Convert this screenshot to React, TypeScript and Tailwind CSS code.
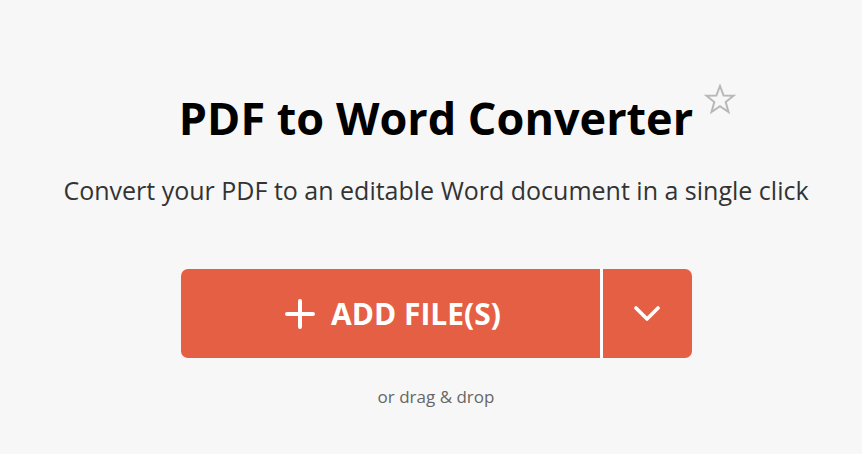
export default function App() {
  return (
    <div
      className="flex h-[454px] w-full flex-col items-center bg-[#f7f7f7] pl-[10px] pt-[88px]"
      style={{ fontFamily: '"Open Sans", sans-serif' }}
    >
      <div className="relative">
        <h1 className="text-[45px] font-bold leading-[60px] text-black">PDF to Word Converter</h1>
        <svg
          viewBox="0 0 32 30"
          className="absolute -right-[43px] -top-[4px] h-[30px] w-[32px]"
          fill="none"
          stroke="#b8b8b8"
          strokeWidth={2}
          strokeLinejoin="miter"
        >
          <polygon points="16,2 19.6,11.6 29.5,11.8 21.7,18 24.5,28 16,22.2 7.5,28 10.3,18 2.5,11.8 12.4,11.6" />
        </svg>
      </div>
      <p className="mt-[25px] text-[25px] leading-[34px] text-[#333]">
        Convert your PDF to an editable Word document in a single click
      </p>

      <div className="mt-[62px] flex h-[89px] w-[511px] overflow-hidden rounded-[7px]">
        <button className="flex flex-1 items-center justify-center gap-[16px] bg-[#e55f44] pl-[6px] text-white">
          <svg viewBox="0 0 30 30" className="size-[30px]" fill="none" stroke="white" strokeWidth={4} strokeLinecap="round">
            <path d="M15 2v26M2 15h26" />
          </svg>
          <span className="text-[30px] font-bold leading-none">ADD FILE(S)</span>
        </button>
        <div className="w-[3px] bg-white" />
        <button className="flex w-[89px] items-center justify-center bg-[#e55f44] text-white">
          <svg viewBox="0 0 26 16" className="h-[16px] w-[26px]" fill="none" stroke="white" strokeWidth={3.6} strokeLinecap="round" strokeLinejoin="round">
            <path d="M2 2l11 11L24 2" />
          </svg>
        </button>
      </div>

      <p className="mt-[26px] text-[17px] text-[#666]">or drag &amp; drop</p>
    </div>
  )
}
